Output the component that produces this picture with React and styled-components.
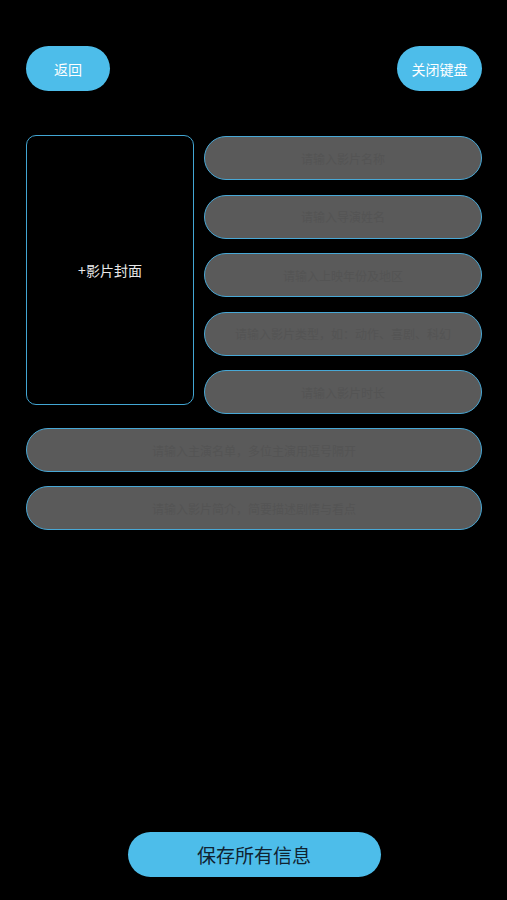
import React from "react";
import styled, { createGlobalStyle } from "styled-components";

const GlobalStyle = createGlobalStyle`
  html, body {
    margin: 0;
    padding: 0;
    background: #000;
  }
  body {
    font-family: "Noto Sans CJK SC", "Noto Sans", sans-serif;
  }
  * { box-sizing: border-box; }
`;

const Page = styled.div`
  min-height: 900px;
  display: flex;
  flex-direction: column;
  padding: 46px 25px 23px 26px;
  background: #000;
`;

const TopBar = styled.div`
  display: flex;
  justify-content: space-between;
  align-items: center;
`;

const PillButton = styled.button`
  height: 45px;
  width: ${(p) => p.$w}px;
  border: none;
  border-radius: 23px;
  background: #4dbdea;
  color: #fff;
  font-family: inherit;
  font-size: 14px;
  padding: 0;
  display: flex;
  align-items: center;
  justify-content: center;
`;

const Form = styled.div`
  margin-top: 45px;
  display: flex;
  flex-direction: column;
  gap: 14px;
`;

const TopSection = styled.div`
  display: grid;
  grid-template-columns: 168px 1fr;
  column-gap: 10px;
  align-items: start;
`;

const Cover = styled.div`
  height: 270px;
  border: 1.5px solid #42a6d3;
  border-radius: 10px;
  display: flex;
  align-items: center;
  justify-content: center;
  color: #e8e8e8;
  font-size: 14px;
  margin-top: -1px;
`;

const FieldStack = styled.div`
  display: flex;
  flex-direction: column;
  gap: 14.5px;
`;

const Field = styled.input`
  height: 44px;
  width: 100%;
  border: 1.5px solid #48a8d6;
  border-radius: 22px;
  background: #5a5a5a;
  color: #ddd;
  text-align: center;
  font-family: inherit;
  font-size: 12px;
  outline: none;
  padding: 0 10px;
  &::placeholder {
    color: #545454;
  }
`;

const Footer = styled.div`
  margin-top: auto;
  display: flex;
  justify-content: center;
`;

const SaveButton = styled.button`
  width: 253px;
  height: 45px;
  border: none;
  border-radius: 23px;
  background: #4dbdea;
  color: #102331;
  font-family: inherit;
  font-size: 19px;
  font-weight: 400;
  padding: 0;
`;

const sideFields = [
  "请输入影片名称",
  "请输入导演姓名",
  "请输入上映年份及地区",
  "请输入影片类型，如：动作、喜剧、科幻",
  "请输入影片时长",
];

const wideFields = [
  "请输入主演名单，多位主演用逗号隔开",
  "请输入影片简介，简要描述剧情与看点",
];

export default function App() {
  return (
    <>
      <GlobalStyle />
      <Page>
        <TopBar>
          <PillButton $w={84}>返回</PillButton>
          <PillButton $w={85}>关闭键盘</PillButton>
        </TopBar>
        <Form>
          <TopSection>
            <Cover>+影片封面</Cover>
            <FieldStack>
              {sideFields.map((p) => (
                <Field key={p} placeholder={p} />
              ))}
            </FieldStack>
          </TopSection>
          {wideFields.map((p) => (
            <Field key={p} placeholder={p} />
          ))}
        </Form>
        <Footer>
          <SaveButton>保存所有信息</SaveButton>
        </Footer>
      </Page>
    </>
  );
}
